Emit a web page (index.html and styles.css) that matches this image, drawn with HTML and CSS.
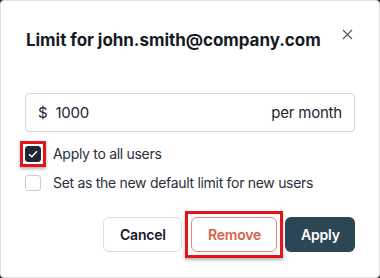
FILE: index.html
```html
<!DOCTYPE html>
<html lang="en">
<head>
    <meta charset="UTF-8">
    <meta name="viewport" content="width=device-width, initial-scale=1.0">
    <title>Limit</title>
    <link rel="stylesheet" href="styles.css">
</head>
<body>
    <section class="dialog">
        <header class="head">
            <h1>Limit for john.smith@company.com</h1>
            <button class="close" type="button" aria-label="Close">
                <svg width="11" height="11" viewBox="0 0 11 11">
                    <path d="M1 1 L10 10 M10 1 L1 10" stroke="#555" stroke-width="1.2" fill="none"/>
                </svg>
            </button>
        </header>

        <div class="amount">
            <span class="cur">$</span>
            <span class="value">1000</span>
            <span class="period">per month</span>
        </div>

        <label class="check">
            <span class="box on marked">
                <svg width="10" height="8" viewBox="0 0 10 8">
                    <path d="M1 4.2 L3.8 6.8 L9 1.2" stroke="#fff" stroke-width="1.4" fill="none"/>
                </svg>
            </span>
            Apply to all users
        </label>
        <label class="check">
            <span class="box"></span>
            Set as the new default limit for new users
        </label>

        <div class="actions">
            <button class="btn cancel" type="button">Cancel</button>
            <button class="btn remove marked" type="button">Remove</button>
            <button class="btn apply" type="button">Apply</button>
        </div>
    </section>
</body>
</html>
```

FILE: styles.css
```css
body {
    margin: 0px;
    background: #2b2b2b;
    font-family: Inter, "Liberation Sans", sans-serif;
    color: #1f2430;
}
.dialog {
    box-sizing: border-box;
    width: 380px;
    height: 278px;
    background: white;
    border: 1px solid #e2e2e2;
    border-radius: 4px;
    padding: 27px 24px 0 24px;
}
.head {
    display: flex;
    justify-content: space-between;
    align-items: flex-start;
}
h1 {
    margin: 0;
    font-size: 17px;
    line-height: 24px;
    font-weight: 700;
    color: #151a24;
    padding-left: 1px;
    letter-spacing: -0.05px;
}
.close {
    border: none;
    background: none;
    padding: 0;
    margin: 1px 2px 0 0;
    width: 11px;
    height: 11px;
    line-height: 0;
    cursor: pointer;
}
.amount {
    margin-top: 41px;
    height: 39px;
    box-sizing: border-box;
    border: 1px solid #d5d8dd;
    border-radius: 4px;
    display: flex;
    align-items: center;
    padding: 0 12px;
    font-size: 15px;
    line-height: 20px;
    letter-spacing: -0.2px;
}
.cur {
    margin-right: 8px;
}
.value {
    flex: 1;
}
.check {
    display: flex;
    align-items: center;
    gap: 12px;
    height: 20px;
    margin-top: 9px;
    font-size: 14px;
    line-height: 20px;
    letter-spacing: -0.3px;
    color: #2a2f3a;
}
.amount + .check {
    margin-top: 12px;
}
.box {
    box-sizing: border-box;
    width: 16px;
    height: 16px;
    border: 1px solid #c9cdd3;
    border-radius: 3px;
    display: flex;
    align-items: center;
    justify-content: center;
    background: white;
}
.box.on {
    background: #1e2738;
    border-color: #1e2738;
}
.marked {
    position: relative;
}
.marked::after {
    content: "";
    position: absolute;
    top: -7px;
    left: -7px;
    right: -7px;
    bottom: -7px;
    border: 3px solid #e3141b;
    box-shadow: 0 2px 3px rgba(0,0,0,0.3);
    pointer-events: none;
}
.box.marked::after {
    top: -6px;
    left: -6px;
    right: -6px;
    bottom: -6px;
}
.actions {
    margin-top: 24px;
    display: flex;
    justify-content: flex-end;
    gap: 8px;
}
.btn {
    height: 35px;
    box-sizing: border-box;
    border-radius: 6px;
    font-family: Inter, "Liberation Sans", sans-serif;
    font-size: 14px;
    font-weight: 600;
    letter-spacing: -0.2px;
    padding: 0 16px;
    background: white;
    cursor: pointer;
}
.cancel {
    width: 79px;
    border: 1px solid #d9e1ea;
    color: #151a24;
    margin-right: 1px;
}
.remove {
    width: 86px;
    border: 1px solid #dc8a7a;
    color: #d4624c;
}
.apply {
    width: 70px;
    border: none;
    background: #2b4655;
    color: white;
}
```
